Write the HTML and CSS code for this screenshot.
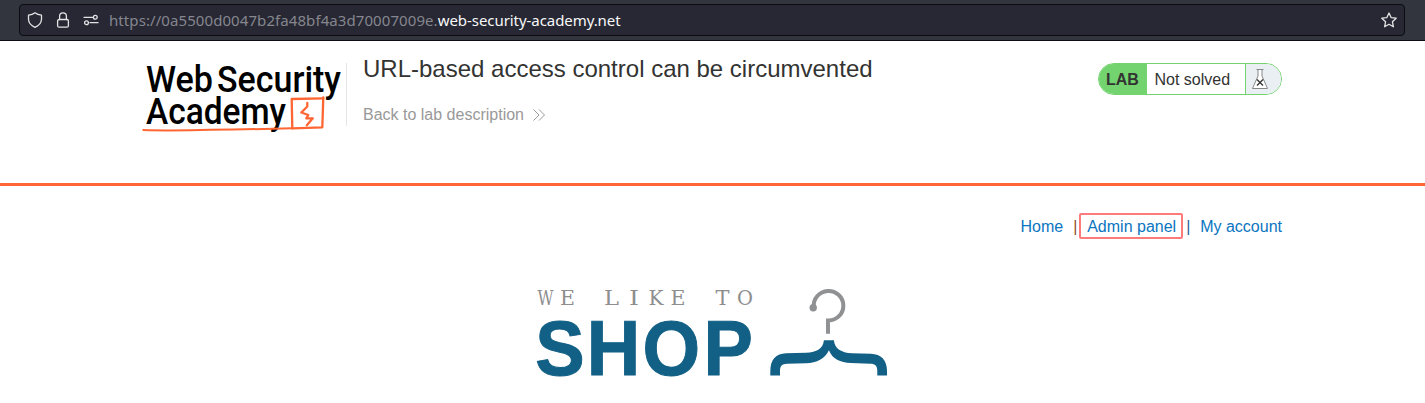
FILE: index.html
```
<!DOCTYPE html>
<html lang="en">
<head>
<meta charset="utf-8">
<title>URL-based access control can be circumvented</title>
<link rel="stylesheet" href="styles.css">
</head>
<body>
<div class="toolbar">
  <div class="urlbar">
    <svg class="tool-icon" width="16" height="16" viewBox="0 0 16 16"><path d="M8 .8C6.300 2.200 4 3 1.500 3.200v4C1.700 11 4.300 13.700 8 15.300c3.700-1.600 6.300-4.300 6.500-8.100v-4C12 3 9.700 2.200 8 .8z"/></svg>
    <svg class="tool-icon" width="16" height="16" viewBox="0 0 16 16"><rect x="2.600" y="7.500" width="10.800" height="7.700" rx="1.500"/><path d="M4.600 7.500V4.200a3.400 3.400 0 0 1 6.800 0v3.300"/></svg>
    <svg class="tool-icon" width="16" height="16" viewBox="0 0 16 16"><path d="M1 5.300h8.500M7 10.700h8"/><circle cx="12.300" cy="5.300" r="1.900"/><circle cx="3.500" cy="10.700" r="1.900"/></svg>
    <div class="url">https://0a5500d0047b2fa48bf4a3d70007009e.<span class="domain">web-security-academy.net</span></div>
    <svg class="tool-icon star" width="16" height="16" viewBox="0 0 16 16"><path d="M8 1l2.100 4.600 5.100.6-3.800 3.500 1 5.100L8 12.300l-4.400 2.500 1-5.100L.8 6.200l5.100-.6z"/></svg>
  </div>
</div>
<header class="lab-header">
  <svg class="logo" width="204" height="74" viewBox="0 0 204 74">
    <g class="logo-text">
      <text x="3" y="34" textLength="67" lengthAdjust="spacingAndGlyphs">Web</text>
      <text x="74" y="34" textLength="124" lengthAdjust="spacingAndGlyphs">Security</text>
      <text x="3" y="66" textLength="140" lengthAdjust="spacingAndGlyphs">Academy</text>
    </g>
    <g class="logo-mark">
      <path class="underline" d="M.3 72C30 73.200 60 71.600 90 71.600L149.300 70.300"/>
      <path d="M149.300 70.300l-.6-29.300 31.600-.7"/>
      <path d="M180.300 39.500l-1 29.800-30 1"/>
      <path d="M164.300 45v3.500l-6 6 7 2.500-2 3.300h6.500l-6 7"/>
    </g>
  </svg>
  <div class="title-block">
    <h1>URL-based access control can be circumvented</h1>
    <a class="back">Back to lab description
      <svg width="12" height="12" viewBox="0 0 12 12"><path d="M.5.500L6 6 .5 11.500M6 .5L11.500 6 6 11.500"/></svg>
    </a>
  </div>
  <div class="status">
    <span class="lab">LAB</span>
    <span class="state">Not solved</span>
    <span class="flask"><svg width="18" height="22" viewBox="0 0 18 22"><path class="glass" d="M5.500 1.500h7M7 2v6L1.500 20.500h15L11 8V2"/><path class="cross" d="M6 11.500l6 6M12 11.500l-6 6"/></svg></span>
  </div>
</header>
<main>
  <nav class="links">
    <a>Home</a><span class="divider">|</span><a class="admin">Admin panel</a><span class="divider second">|</span><a>My account</a>
  </nav>
  <svg class="shop" width="352" height="92" viewBox="0 0 352 92">
    <g class="tagline">
      <text x="0.500" y="17.500" textLength="16" lengthAdjust="spacingAndGlyphs">W</text>
      <text x="23" y="17.500" textLength="15" lengthAdjust="spacingAndGlyphs">E</text>
      <text x="67" y="17.500" textLength="15" lengthAdjust="spacingAndGlyphs">L</text>
      <text x="92" y="17.500" textLength="10" lengthAdjust="spacingAndGlyphs">I</text>
      <text x="111.500" y="17.500" textLength="15" lengthAdjust="spacingAndGlyphs">K</text>
      <text x="133.500" y="17.500" textLength="15" lengthAdjust="spacingAndGlyphs">E</text>
      <text x="178.500" y="17.500" textLength="14" lengthAdjust="spacingAndGlyphs">T</text>
      <text x="200" y="17.500" textLength="16" lengthAdjust="spacingAndGlyphs">O</text>
    </g>
    <text class="shop-name" transform="scale(.95 1)" y="88" x="-1.800 52.500 111 175.300">SHOP</text>
    <path class="hook" d="M276.800 20a14.800 14.800 0 1 1 14.800 13.500H291V46.700"/>
    <circle class="knob" cx="276.200" cy="20.700" r="3.700"/>
    <path class="hanger" d="M233.300 88.500V85C233.300 72 239 66.700 249 66.300L269 65.700C280 65.200 286 61.500 286.900 53.200h10C297.700 61.500 304 65.700 315 66.200L334 66.700C344 67.200 350 72.700 350 84v4.500h-9.700V84c0-5-2-7.300-7-7.300L314 76c-11-.5-18.500-4-22.100-12.800C288 71.700 280 75.700 269 76.200L250 76.700c-5 .2-7 2.300-7 7.300v4.500z"/>
  </svg>
</main>
</body>
</html>
```
FILE: styles.css
```
* { box-sizing: border-box; }
body { margin: 0; background: #fff; color: #333332; font: 16px "Liberation Sans", Arial, sans-serif; }
.toolbar { height: 41px; padding: 4px 20px 0 19px; background: #32353d; border-bottom: 1px solid #0c0d12; }
.urlbar { display: flex; align-items: center; gap: 12px; height: 32px; padding: 0 7px; background: #272833; border: 1px solid #0b0c11; border-radius: 4px; }
.tool-icon { flex: none; fill: none; stroke: #e4e4e6; stroke-width: 1.300; stroke-linejoin: round; stroke-linecap: round; }
.star { margin-left: auto; }
.url { margin-left: -2px; color: #85868e; font: 15px "Noto Sans", sans-serif; letter-spacing: .08px; white-space: nowrap; }
.domain { color: #f8f8fa; letter-spacing: -.06px; }
.lab-header { display: flex; align-items: flex-start; height: 145px; padding: 17px 143px 0; border-bottom: 3px solid #ff6633; }
.logo { flex: none; overflow: visible; }
.logo-text { fill: #000; font: 500 37px Roboto, sans-serif; }
.logo-mark { fill: none; stroke: #ff6633; stroke-width: 2.300; stroke-linecap: round; stroke-linejoin: round; }
.underline { stroke-width: 2; }
.title-block { height: 63px; margin-top: 5px; margin-left: -1px; padding-left: 16px; border-left: 1px solid #e6e6e6; }
h1 { margin: -8px 0 0; font-size: 24px; line-height: 28px; font-weight: 400; white-space: nowrap; }
.back { display: flex; align-items: center; gap: 9px; margin-top: 23px; line-height: 18px; color: #999; }
.back svg { fill: none; stroke: #999; stroke-width: 1; }
.status { display: flex; width: 184px; height: 32px; margin: 5px 0 0 auto; border: 1px solid #72d36f; border-radius: 16px; overflow: hidden; line-height: 31px; }
.lab { width: 48px; padding-left: 7px; background: #72d36f; font-weight: 700; line-height: 32px; }
.state { width: 99px; padding-left: 7.500px; border-right: 1px solid #72d36f; }
.flask { flex: 1; padding: 4px 0 0 5px; background: #eaeff3; line-height: 0; }
.glass { fill: #fff; stroke: #888; }
.cross { fill: none; stroke: #333; stroke-width: 1.300; }
main { padding: 27px 143px 0; }
.links { display: flex; justify-content: flex-end; align-items: center; height: 26px; color: #0b75bf; line-height: 20px; }
.links > * { padding-top: 2px; }
.links .divider { margin-left: 10px; width: 4px; color: #8b4c28; }
.links .admin { margin-left: 2px; height: 26px; width: 104px; padding: 1px 0 0 6px; border: 2px solid #ff7b7b; border-radius: 2px; line-height: 22px; }
.links .second { margin: 0 10px 0 3px; color: #285e9a; }
.shop { display: block; margin: 48px 0 0 394px; overflow: visible; }
.tagline { fill: #8e8e8e; font: 20px "DejaVu Serif", serif; }
.shop-name { fill: #126085; stroke: #126085; stroke-width: 1px; font: bold 78px "Liberation Sans", sans-serif; }
.hook { fill: none; stroke: #909192; stroke-width: 4; }
.knob { fill: #909192; }
.hanger { fill: #126085; }
```
